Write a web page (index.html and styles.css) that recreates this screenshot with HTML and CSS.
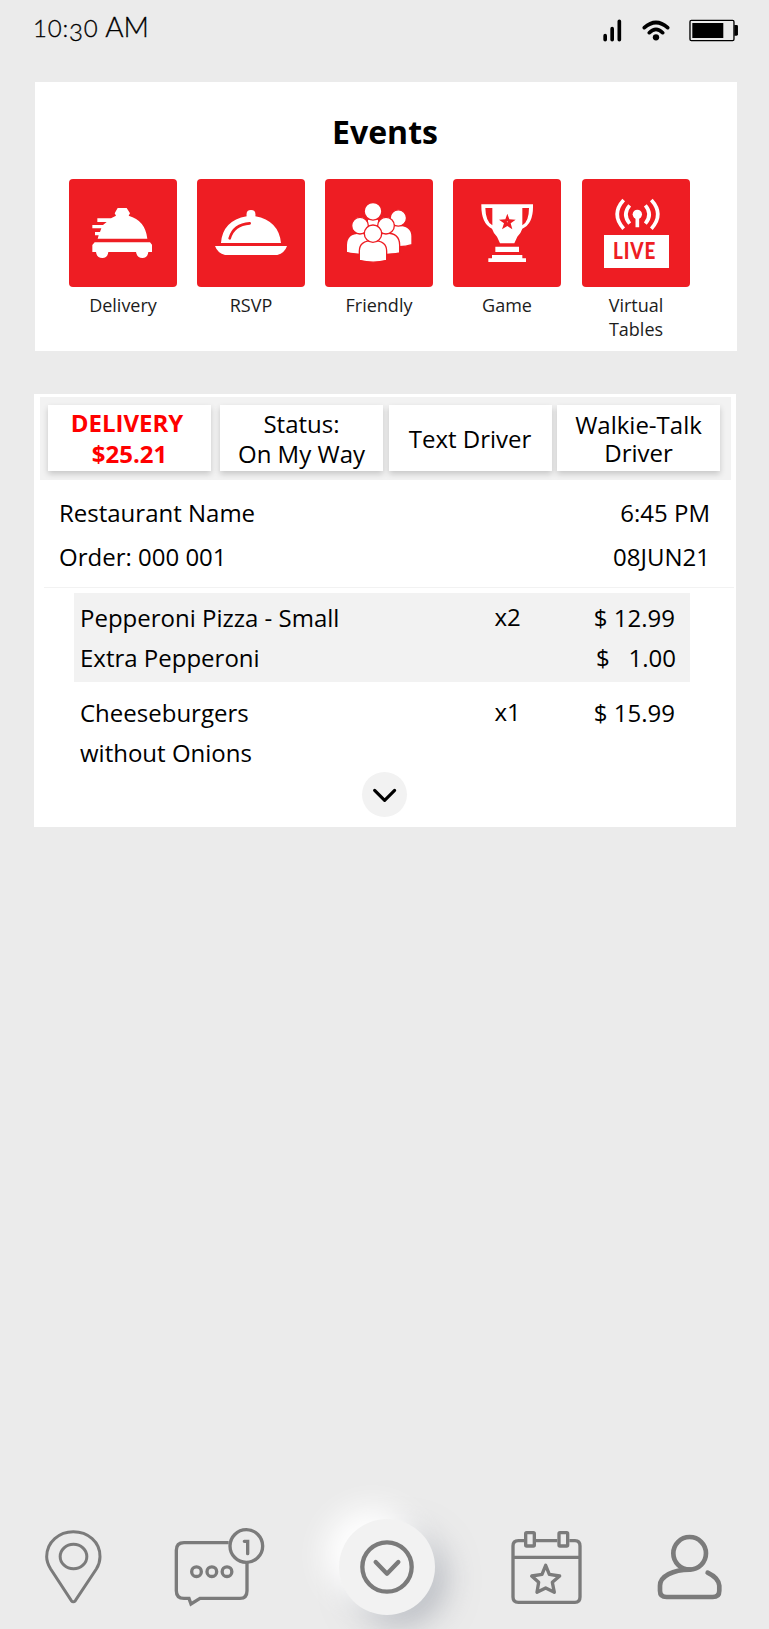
FILE: index.html
```html
<!DOCTYPE html>
<html lang="en">
<head>
<meta charset="utf-8">
<title>Events</title>
<link rel="stylesheet" href="styles.css">
</head>
<body>
<div class="screen">
  <header class="status">
    <div class="clock"><span class="num">10:<span class="low">3</span>0</span> AM</div>
    <svg class="status-icons" viewBox="650 54 412 74" width="137.3" height="24.7">
      <g stroke="#000" stroke-width="11" stroke-linecap="round" fill="none">
        <path d="M659.500 107V119M680.500 86V119M702 64V119"/>
        <path d="M777 83Q812 52 847 83M792 98Q812 78 832 98"/>
      </g>
      <circle cx="812" cy="112" r="9.500"/>
      <rect x="914" y="61" width="132" height="61" rx="4" fill="none" stroke="#000" stroke-width="4"/>
      <rect x="921" y="69" width="93" height="45"/>
      <path d="M1047 75h7q4 0 4 4v24q0 4-4 4h-7z"/>
    </svg>
  </header>

  <section class="card events">
    <h1>Events</h1>
    <div class="tiles">
      <div class="tile">
        <svg viewBox="117 42 324 324"><g fill="#fff">
          <path d="M263 129H290L300 145L296 152Q346 166 352 221H203L206 211H195V201H210L214 190H187V180H219L230 171H202V160H243L258 152L254 145Z"/>
          <path d="M194 232H360L366 239V261H355Q353 279 337 279Q321 279 318 261H235Q233 279 217 279Q200 279 198 261H187V240Z"/>
        </g></svg>
        <span>Delivery</span>
      </div>
      <div class="tile">
        <svg viewBox="501 42 324 324">
          <path fill="#fff" d="M573 234Q578 167 650 154Q647 135 663 135Q679 135 676 154Q746 167 753 234Z"/>
          <path fill="#fff" d="M555 243H771Q764 264 742 270H585Q563 265 555 243Z"/>
          <path fill="none" stroke="#ee1d23" stroke-width="8" stroke-linecap="round" d="M599 220Q611 178 659 175"/>
        </svg>
        <span>RSVP</span>
      </div>
      <div class="tile">
        <svg viewBox="45 42 324 324"><g fill="#fff" stroke="#ee1d23" stroke-width="4">
          <path d="M228 202Q228 180 262 180Q306 180 306 214V239Q285 246 262 245Z"/>
          <circle cx="265" cy="159" r="24.500"/>
          <path d="M172 162H206V210H172Z"/>
          <circle cx="189" cy="139" r="26.500"/>
          <path d="M109 262V240Q109 204 150 204Q185 204 185 240V268Q140 270 109 262Z"/>
          <path d="M193 268V240Q193 204 228 204Q269 204 269 240V264Q240 270 193 268Z"/>
          <circle cx="150" cy="182" r="25"/><circle cx="228" cy="182" r="25"/>
          <path d="M148 286V258Q148 227 189 227Q230 227 230 258V286Q190 297 148 286Z"/>
          <circle cx="189" cy="206" r="26"/>
        </g></svg>
        <span>Friendly</span>
      </div>
      <div class="tile">
        <svg viewBox="429 42 324 324">
          <g fill="#fff"><path fill-rule="evenodd" d="M514 118H669Q671 176 637 191Q633 204 622 215L613 235H570L561 215Q550 204 546 191Q513 176 514 118ZM526 129Q527 170 547 181V129ZM637 129V181Q657 170 657 129Z"/>
          <path d="M556 245H627V261H556ZM546 270H637V280H648V291H535V280H546Z"/></g>
          <path fill="#ee1d23" d="M592 146L598 163L617 164L602 175L607 193L592 183L576 193L582 175L567 164L586 163Z"/>
          <circle cx="592" cy="170" r="1.500" fill="#fff"/>
        </svg>
        <span>Game</span>
      </div>
      <div class="tile">
        <svg viewBox="126 42 324 324">
          <g stroke="#fff" fill="none" stroke-width="11">
            <path d="M251 105Q212 148 251 191M269 121Q246 148 269 176M334 105Q373 148 334 191M316 121Q339 148 316 176M292 148V187"/>
          </g>
          <circle cx="292" cy="148" r="14" fill="#fff"/>
          <path fill="#fff" d="M192 210H387V309H192Z"/>
          <text class="live" transform="translate(219 282) scale(.86 1)">LIVE</text>
        </svg>
        <span>Virtual<br>Tables</span>
      </div>
    </div>
  </section>

  <section class="card order">
    <div class="actions">
      <div class="btn total"><div class="kind">DELIVERY</div><div>$25.21</div></div>
      <div class="btn state">Status:<br>On My Way</div>
      <div class="btn text">Text Driver</div>
      <div class="btn talk">Walkie-Talk<br>Driver</div>
    </div>
    <div class="summary">
      <div class="row"><span>Restaurant Name</span><span>6:45 PM</span></div>
      <div class="row"><span>Order: 000 001</span><span>08JUN21</span></div>
    </div>
    <div class="item shaded">
      <div>Pepperoni Pizza - Small<br>Extra Pepperoni</div>
      <div class="qty">x2</div>
      <div class="price">$ 12.99<br><span class="extra">$ &nbsp; 1.00</span></div>
    </div>
    <div class="item">
      <div>Cheeseburgers<br>without Onions</div>
      <div class="qty">x1</div>
      <div class="price">$ 15.99</div>
    </div>
    <div class="more">
      <svg viewBox="1025 575 137 137"><path d="M1063 630L1093 660L1123 630" fill="none" stroke="#000" stroke-width="9.500" stroke-linecap="round" stroke-linejoin="round"/></svg>
    </div>
  </section>

  <nav class="nav">
    <svg class="pin" viewBox="75 120 171 222" width="57" height="74" stroke-width="9">
      <path d="M160 125C203 125 241 155 240 200C240 214 235 227 229 237L166 332Q160 339 154 332L92 237C86 227 80 214 80 200C80 155 118 125 160 125Z"/>
      <ellipse cx="160.500" cy="199.500" rx="40" ry="37"/>
    </svg>
    <svg class="chat" viewBox="462 111 276 240" width="92" height="80" stroke-width="10">
      <path d="M626 158H492Q469 158 469 181V302Q469 325 492 325H507L513 342L540 325H660Q681 325 681 302V218"/>
      <circle cx="679" cy="168" r="49"/>
      <circle cx="529.500" cy="245" r="14.500"/><circle cx="575.500" cy="245" r="14.500"/><circle cx="621" cy="245" r="14.500"/>
      <path d="M673 154H683V191" stroke-linecap="round"/>
    </svg>
    <div class="orb">
      <svg viewBox="148 147 288 288" width="96" height="96" stroke-width="13">
        <circle cx="292" cy="291" r="74"/>
        <path d="M258 276L292 311L326 276" stroke-linecap="round" stroke-linejoin="round"/>
      </svg>
    </div>
    <svg class="calendar" viewBox="93 120 213 225" width="71" height="75" stroke-width="10">
      <path d="M132 152H115Q99 152 99 168V321Q99 337 115 337H285Q300 337 300 321V168Q300 152 285 152H268M168 152H232M99 202H300"/>
      <rect x="137" y="128" width="26" height="40" rx="3"/><rect x="237" y="128" width="26" height="40" rx="3"/>
      <path stroke-linejoin="round" d="M197 226L208 253L239 258L217 277L223 307L197 294L171 307L176 277L155 258L186 253Z"/>
    </svg>
    <svg class="person" viewBox="532 132 196 198" width="65.300" height="66" stroke-width="14">
      <circle cx="630" cy="190" r="49"/>
      <path stroke-linecap="round" d="M630 239C580 239 541 259 541 287V302Q541 321 561 321H699Q719 321 719 302V287Q717 264 684 248"/>
    </svg>
  </nav>
</div>
</body>
</html>
```
FILE: styles.css
```css
* { box-sizing: border-box; }
body { margin: 0; background: #ebebeb; font-family: "Open Sans", "Noto Sans", sans-serif; color: #000; }
.screen { width: 769px; height: 1629px; display: flex; flex-direction: column; overflow: hidden; }

.status { height: 82px; display: flex; justify-content: space-between; padding: 0 30px 0 33px; }
.clock { font: 300 28px/34px Lato, sans-serif; padding-top: 9px; white-space: nowrap; -webkit-text-stroke: .3px #000; }
.num { font-size: 24px; letter-spacing: .8px; }
.low { display: inline-block; transform: translateY(4px); }
.status-icons { margin-top: 18px; }

.card { width: 702px; background: #fff; flex: none; }
.events { margin-left: 35px; height: 269px; }
h1 { margin: 0; padding: 28px 2px 0 0; height: 97px; font-size: 32px; line-height: 44px; font-weight: 700; text-align: center; }
.tiles { display: flex; gap: 20px; padding-left: 34px; }
.tile { width: 108px; display: flex; flex-direction: column; text-align: center; font-size: 18px; line-height: 24px; color: #1c1c1c; }
.tile:last-child { margin-left: 1px; }
.tile svg { display: block; width: 108px; height: 108px; background: #ee1d23; border-radius: 4px; margin-bottom: 6px; }
.live { font: 900 66px Lato, sans-serif; fill: #ee1d23; letter-spacing: 3px; }

.order { margin: 43px 0 0 34px; height: 433px; padding: 3px 5px 0 6px; font-size: 24px; }
.actions { height: 83px; background: #f2f2f2; padding: 8px; display: flex; }
.btn { width: 163px; height: 66px; background: #fff; box-shadow: 0 3px 6px rgba(0,0,0,.18); text-align: center; line-height: 30px; white-space: nowrap; }
.total { color: #f00; font-weight: 700; line-height: 31px; padding-top: 2px; }
.kind { padding-right: 5px; }
.state { margin-left: 9px; padding-top: 4px; }
.text { margin-left: 6px; padding: 19px 1px 0 0; }
.talk { margin-left: 5px; padding-top: 6px; line-height: 28px; }
.summary { margin: 0 -3px 0 4px; height: 108px; padding: 11px 24px 0 15px; border-bottom: 1px solid #f2f2f2; }
.row { display: flex; justify-content: space-between; line-height: 44px; }
.item { width: 616px; height: 89px; margin: 5px 0 0 34px; padding: 5px 15px 0 6px; display: grid; grid-template-columns: 414.5px 60px 1fr; line-height: 40px; white-space: nowrap; }
.shaded { background: #f2f2f2; }
.item + .item { margin-top: 6px; }
.qty { margin-top: -1px; }
.price { text-align: right; }
.extra { margin-right: -1px; }
.more { width: 45.600px; height: 45.600px; margin: -5.300px 0 0 321.600px; border-radius: 50%; background: #f2f2f2; }
.more svg { display: block; width: 100%; height: 100%; }

.nav { margin-top: auto; height: 139px; flex: none; display: flex; align-items: flex-start; padding-left: 45px; }
.nav svg { fill: none; stroke: #7b7b7b; flex: none; display: block; }
.pin { margin-top: 40px; }
.chat { margin: 37px 0 0 72px; }
.orb { margin: 29px 0 0 73.300px; width: 96px; height: 96px; flex: none; border-radius: 50%; background: #f2f2f2; box-shadow: -15px -12px 30px #fff, 12px 12px 30px rgba(140,146,158,.5); }
.calendar { margin: 40px 0 0 75.700px; }
.person { margin: 44px 0 0 75px; }
```
